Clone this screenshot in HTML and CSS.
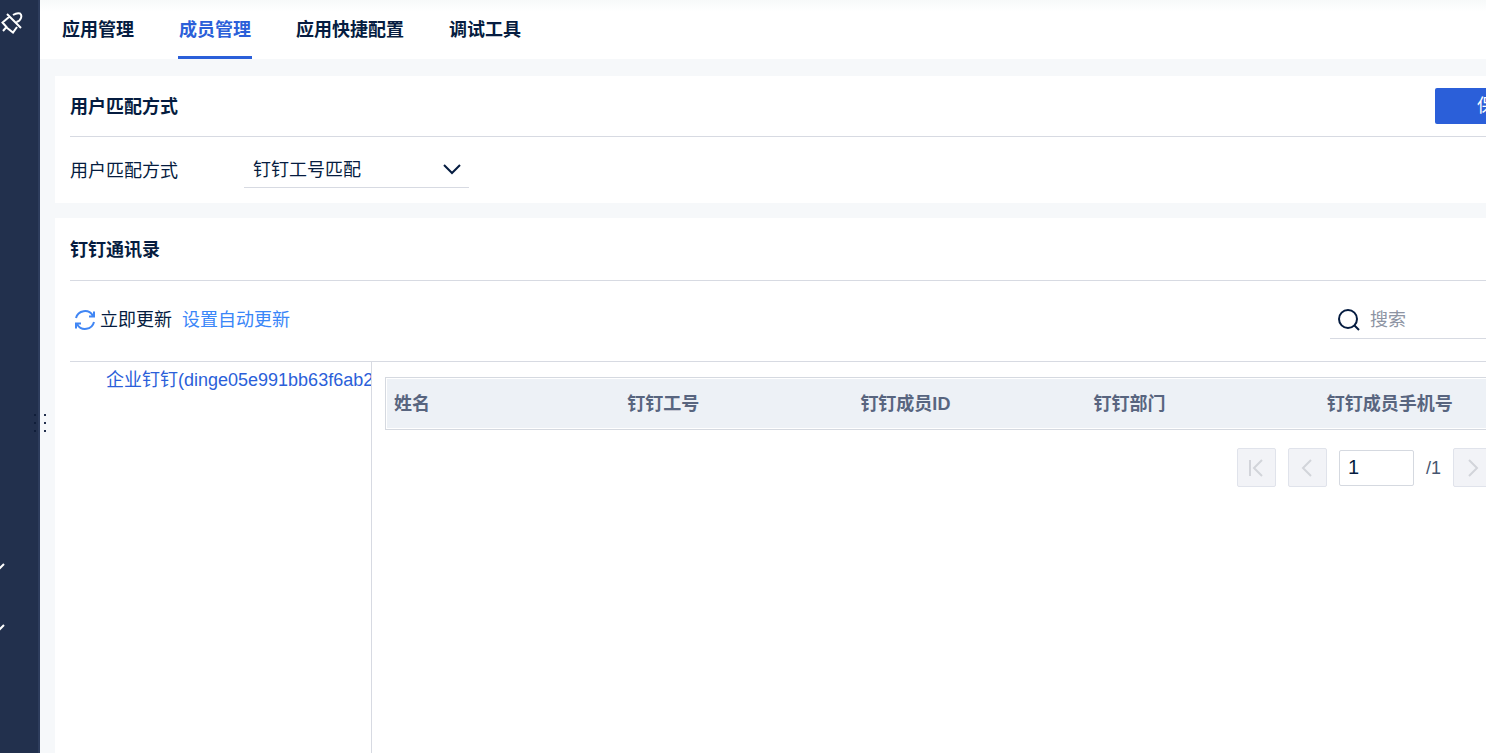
FILE: index.html
```
<!DOCTYPE html>
<html lang="zh-CN">
	<head>
		<meta charset="UTF-8">
		<title>成员管理</title>
		<link rel="stylesheet" href="styles.css">
	</head>
	<body>
		<div class="app">
			<aside class="sidebar">
				<svg class="sidebar_plug" viewBox="0 0 22 22" width="22" height="22">
					<path d="M6 2L20 16M8 5L1.500 10.500L5.500 15L2 19M5.500 15.500L12 20.500L16 15M12 3Q16 .5 19 1.500Q21 3 20 6Q19 9 15.500 10"/>
				</svg>
				<div class="sidebar_menu">
					<svg class="sidebar_arrow" viewBox="0 0 16 10" width="16" height="10"><path d="M2 2l6 6 6-6"/></svg>
					<svg class="sidebar_arrow" viewBox="0 0 16 10" width="16" height="10"><path d="M2 2l6 6 6-6"/></svg>
				</div>
				<svg class="drag_handle" viewBox="0 0 14 20" width="14" height="20">
					<path class="drag_dots--dark" d="M1 1h2v2h-2zM1 9h2v2h-2zM1 17h2v2h-2z"/>
					<path class="drag_dots" d="M11 1h2v2h-2zM11 9h2v2h-2zM11 17h2v2h-2z"/>
				</svg>
			</aside>
			<main class="main">
				<nav class="tabs">
					<a class="tab" href="#">应用管理</a>
					<a class="tab tab--active" href="#">成员管理</a>
					<a class="tab" href="#">应用快捷配置</a>
					<a class="tab" href="#">调试工具</a>
				</nav>
				<div class="content">
					<section class="panel">
						<div class="panel_head">
							<h2>用户匹配方式</h2>
							<button class="save" type="button">保存</button>
						</div>
						<div class="match_row">
							<label for="match">用户匹配方式</label>
							<div class="select_box">
								<select id="match">
									<option>钉钉工号匹配</option>
								</select>
								<svg class="select_arrow" viewBox="0 0 18 12" width="18" height="12"><path d="M1 2l8 8 8-8"/></svg>
							</div>
						</div>
					</section>
					<section class="panel panel--fill">
						<div class="panel_head">
							<h2>钉钉通讯录</h2>
						</div>
						<div class="toolbar">
							<button class="refresh" type="button">
								<svg viewBox="0 0 22 22" width="22" height="22"><path d="M2 9A9.200 9.200 0 0 1 18.800 6.500M20 13A9.200 9.200 0 0 1 3.200 15.500M20 2.500V7.500H15M2 19.500V14.500H7"/></svg>
								立即更新
							</button>
							<a class="auto_link" href="#">设置自动更新</a>
							<div class="search">
								<svg viewBox="0 0 22 22" width="22" height="22"><circle cx="10" cy="10" r="9"/><path d="M16 16l5 5"/></svg>
								<input type="text" placeholder="搜索" aria-label="搜索">
							</div>
						</div>
						<div class="directory">
							<div class="tree">
								<a class="tree_node" href="#">企业钉钉(dinge05e991bb63f6ab2)</a>
							</div>
							<div class="members">
								<table class="member_table">
									<thead>
										<tr>
											<th>姓名</th>
											<th>钉钉工号</th>
											<th>钉钉成员ID</th>
											<th>钉钉部门</th>
											<th>钉钉成员手机号</th>
										</tr>
									</thead>
								</table>
								<div class="pager">
									<button class="page_btn" type="button" aria-label="首页" disabled>
										<svg viewBox="0 0 18 18" width="18" height="18"><path d="M3 1v16M15 1l-8 8 8 8"/></svg>
									</button>
									<button class="page_btn" type="button" aria-label="上一页" disabled>
										<svg viewBox="0 0 18 18" width="18" height="18"><path d="M13 1l-8 8 8 8"/></svg>
									</button>
									<input class="page_input" type="text" value="1" aria-label="页码">
									<span class="page_total">/1</span>
									<button class="page_btn" type="button" aria-label="下一页" disabled>
										<svg viewBox="0 0 18 18" width="18" height="18"><path d="M5 1l8 8-8 8"/></svg>
									</button>
									<button class="page_btn" type="button" aria-label="末页" disabled>
										<svg viewBox="0 0 18 18" width="18" height="18"><path d="M15 1v16M3 1l8 8-8 8"/></svg>
									</button>
								</div>
							</div>
						</div>
					</section>
				</div>
			</main>
		</div>
	</body>
</html>
```
FILE: styles.css
```
* {
	box-sizing: border-box;
}
body {
	margin: 0;
	color: #051c40;
	font-family: "Liberation Sans", "Noto Sans CJK SC", sans-serif;
	font-size: 18px;
	line-height: 26px;
	overflow: hidden;
}
a {
	text-decoration: none;
}
button, input, select {
	font: inherit;
	color: inherit;
}
svg {
	fill: none;
	stroke: currentColor;
	stroke-width: 2;
	flex-shrink: 0;
}
.app {
	display: flex;
	height: 100vh;
}

/* sidebar */
.sidebar {
	position: relative;
	width: 40px;
	flex-shrink: 0;
	display: flex;
	flex-direction: column;
	justify-content: space-between;
	padding: 12px 0 120px;
	background: #22304d;
	border-right: 2px solid #2d3c5c;
	color: #fff;
}
.sidebar_plug {
	margin-left: 1px;
}
.sidebar_menu {
	display: flex;
	flex-direction: column;
	gap: 51px;
	margin-left: -10px;
}
.drag_handle {
	position: absolute;
	top: calc(50% + 36px);
	left: 33px;
	z-index: 2;
	stroke: none;
}
.drag_dots {
	fill: #22304d;
}
.drag_dots--dark {
	fill: #101e3a;
}

.main {
	flex: 1;
	min-width: 0;
	display: flex;
	flex-direction: column;
	overflow: hidden;
	background: #f6f8fa;
}

/* tabs */
.tabs {
	display: flex;
	gap: 43px;
	height: 59px;
	flex-shrink: 0;
	padding-left: 21px;
	background: linear-gradient(#f7f9f9, #fff 12px);
}
.tab {
	padding: 17px 1px 0;
	border-bottom: 3px solid transparent;
	color: #051c40;
	font-weight: bold;
}
.tab--active {
	color: #2b5fd9;
	border-color: #2b5fd9;
}

/* the content is wider than the pane and gets cut on the right */
.content {
	flex: 1;
	display: flex;
	flex-direction: column;
	gap: 15px;
	margin-right: -84px;
	padding: 17px 0 0 15px;
}
.panel {
	padding: 0 15px;
	background: #fff;
}
.panel--fill {
	flex: 1;
	display: flex;
	flex-direction: column;
}
.panel_head {
	display: flex;
	align-items: center;
	justify-content: space-between;
	height: 61px;
	border-bottom: 1px solid #d7dae2;
}
.panel--fill .panel_head {
	height: 63px;
}
h2 {
	margin: 0;
	padding-top: 2px;
	font-size: 18px;
}
.save {
	width: 120px;
	height: 36px;
	padding: 0;
	border: 0;
	border-radius: 2px;
	background: #2b5fd9;
	color: #fff;
}
.match_row {
	display: flex;
	align-items: center;
	height: 66px;
}
.match_row label {
	width: 174px;
	padding-top: 2px;
}
.select_box {
	position: relative;
	width: 225px;
}
.select_box select {
	width: 100%;
	height: 36px;
	padding: 0 30px 0 9px;
	border: 0;
	border-bottom: 1px solid #d7dae2;
	background: none;
	appearance: none;
}
.select_arrow {
	position: absolute;
	top: 11px;
	right: 8px;
	pointer-events: none;
}

.toolbar {
	display: flex;
	align-items: center;
	height: 80px;
	padding-bottom: 2px;
}
.refresh {
	display: flex;
	align-items: center;
	gap: 4px;
	padding: 0 0 0 4px;
	border: 0;
	background: none;
}
.refresh svg {
	color: #4086f4;
}
.auto_link {
	margin-left: 10px;
	color: #3a86f8;
}
.search {
	display: flex;
	align-items: center;
	gap: 10px;
	width: 225px;
	height: 38px;
	margin-left: auto;
	padding-left: 8px;
	border-bottom: 1px solid #d7dae2;
}
.search input {
	flex: 1;
	min-width: 0;
	padding: 0;
	border: 0;
	outline: 0;
	background: none;
}
.search input::placeholder {
	color: #8d94a3;
}

.directory {
	flex: 1;
	display: flex;
	border-top: 1px solid #d7dae2;
}
.tree {
	width: 302px;
	flex-shrink: 0;
	padding: 5px 0 0 36px;
	border-right: 1px solid #d7dae2;
	overflow: hidden;
}
.tree_node {
	color: #2b5fd9;
	white-space: nowrap;
}
.members {
	flex: 1;
	padding: 15px 0 0 13px;
}
.member_table {
	width: 100%;
	table-layout: fixed;
	border: 1px solid #d5d9e0;
	border-spacing: 0;
	padding: 1px;
}
.member_table th {
	height: 49px;
	padding: 0 7px;
	background: #edf1f6;
	color: #58657f;
	text-align: left;
}

/* pager */
.pager {
	display: flex;
	align-items: center;
	justify-content: flex-end;
	gap: 12px;
	padding: 18px 12px 0 0;
}
.page_btn {
	display: flex;
	align-items: center;
	justify-content: center;
	width: 39px;
	height: 39px;
	padding: 0;
	border: 1px solid #e0e3eb;
	border-radius: 2px;
	background: #f2f3f7;
	color: #d2d4da;
}
.page_input {
	width: 75px;
	height: 36px;
	padding: 0 8px;
	border: 1px solid #d5d9e0;
	border-radius: 2px;
	font-size: 20px;
}
.page_total {
	color: #46556f;
}
```
